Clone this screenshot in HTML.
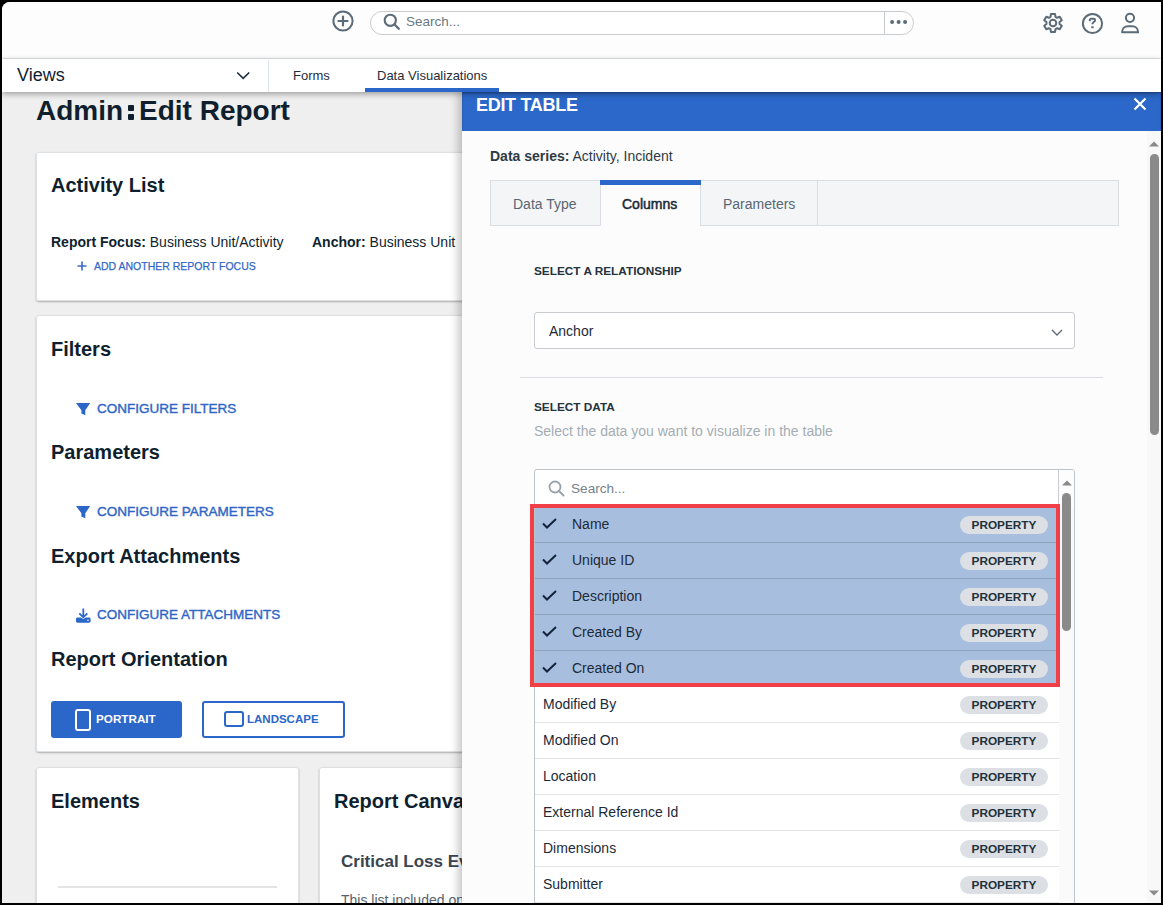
<!DOCTYPE html>
<html><head><meta charset="utf-8">
<style>
*{box-sizing:border-box;margin:0;padding:0}
html,body{width:1163px;height:905px;overflow:hidden;background:#000;font-family:"Liberation Sans",sans-serif;color:#0f1f2e}
#app{position:absolute;left:2px;top:2px;width:1159px;height:901px;background:#efefef;border-top-left-radius:8px;overflow:hidden}
.a{position:absolute;white-space:nowrap}
#topbar{position:absolute;left:0;top:0;width:1159px;height:57px;background:#fdfdfd}
#tbline{position:absolute;left:0;top:56px;width:1159px;height:1px;background:#dfe4e8}
#nav{position:absolute;left:0;top:57px;width:1159px;height:33px;background:#fff;box-shadow:0 2px 6px rgba(0,0,0,.35);z-index:6}
.card{position:absolute;background:#fff;border-radius:3px;box-shadow:inset 0 0 0 1px #dde0e3,0 1px 2px rgba(0,0,0,.28)}
.h{font-weight:bold;font-size:20px;color:#0f1f2e}
.link{color:#2f66c6;font-size:13.5px;font-weight:normal;-webkit-text-stroke:0.4px #2f66c6}
#panel{position:absolute;left:460px;top:89px;width:699px;height:812px;background:#fcfcfc;z-index:5;box-shadow:-4px 0 8px rgba(0,0,0,.22)}
</style></head><body>
<div id="app">
  <div id="topbar">
    <svg class="a" style="left:330px;top:8px" width="22" height="22" viewBox="0 0 22 22"><circle cx="11" cy="11" r="9.6" fill="none" stroke="#5b6b77" stroke-width="2"/><path d="M11 6.5v9M6.5 11h9" stroke="#5b6b77" stroke-width="2.2" stroke-linecap="round"/></svg>
    <div class="a" style="left:368px;top:9px;width:544px;height:24px;border:1px solid #c9cccf;border-radius:12px;background:#fff"></div>
    <div class="a" style="left:882px;top:9px;width:1px;height:24px;background:#c9cccf"></div>
    <svg class="a" style="left:381px;top:11px" width="18" height="18" viewBox="0 0 18 18"><circle cx="7.3" cy="7.3" r="5.6" fill="none" stroke="#5b6b77" stroke-width="2.1"/><path d="M11.5 11.5l4.3 4.3" stroke="#5b6b77" stroke-width="2.3" stroke-linecap="round"/></svg>
    <div class="a" style="left:404px;top:12px;font-size:13.5px;color:#6b7780">Search...</div>
    <svg class="a" style="left:886px;top:16px" width="22" height="8" viewBox="0 0 22 8"><circle cx="4.1" cy="4" r="2" fill="#5b6b77"/><circle cx="10.6" cy="4" r="2" fill="#5b6b77"/><circle cx="17.1" cy="4" r="2" fill="#5b6b77"/></svg>
    <!-- gear -->
    <svg class="a" style="left:1039px;top:9px" width="24" height="24" viewBox="0 0 24 24"><path fill="none" stroke="#5b6b77" stroke-width="2" stroke-linejoin="round" d="M9.53 5.88 L9.93 3.04 L14.07 3.04 L14.47 5.88 L16.06 6.80 L18.73 5.73 L20.80 9.31 L18.54 11.08 L18.54 12.92 L20.80 14.69 L18.73 18.27 L16.06 17.20 L14.47 18.12 L14.07 20.96 L9.93 20.96 L9.53 18.12 L7.94 17.20 L5.27 18.27 L3.20 14.69 L5.46 12.92 L5.46 11.08 L3.20 9.31 L5.27 5.73 L7.94 6.80Z"/><circle cx="12" cy="12" r="3.3" fill="none" stroke="#5b6b77" stroke-width="2"/></svg>
    <svg class="a" style="left:1079px;top:10px" width="23" height="23" viewBox="0 0 23 23"><circle cx="11.5" cy="11.5" r="9.6" fill="none" stroke="#5b6b77" stroke-width="2"/><path d="M8.8 9.2V8.3C8.8 7.3 9.4 6.8 10.4 6.8H12.6C13.6 6.8 14.1 7.4 14.1 8.2C14.1 9.2 13.4 9.7 12.5 10.2C11.8 10.7 11.4 11.1 11.4 12.2" fill="none" stroke="#5b6b77" stroke-width="2"/><rect x="10.3" y="14.2" width="2.3" height="2" fill="#5b6b77"/></svg>
    <svg class="a" style="left:1117px;top:9px" width="22" height="24" viewBox="0 0 22 24"><circle cx="11" cy="6.8" r="4.1" fill="none" stroke="#5b6b77" stroke-width="2"/><path d="M3.1 21.2C3.1 17.8 5.6 15.3 9 15.3H13.2C16.6 15.3 19.1 17.8 19.1 21.2Z" fill="none" stroke="#5b6b77" stroke-width="2" stroke-linejoin="round"/></svg>
  </div>
  <div id="tbline"></div>
  <div id="nav">
    <div class="a" style="left:15px;top:6px;font-size:18px;color:#0f2233">Views</div>
    <svg class="a" style="left:234px;top:12px" width="14" height="9" viewBox="0 0 14 9"><path d="M1.2 1.5l6 5.8 6-5.8" fill="none" stroke="#1e2e3c" stroke-width="1.6"/></svg>
    <div class="a" style="left:266px;top:1px;width:1px;height:32px;background:#dfe4e8"></div>
    <div class="a" style="left:291px;top:9px;font-size:13px;color:#1f2d3a">Forms</div>
    <div class="a" style="left:375px;top:9px;font-size:13px;color:#1f2d3a">Data Visualizations</div>
    <div class="a" style="left:363px;top:29px;width:134px;height:4px;background:#2b66c9"></div>
  </div>

  <div class="a" style="left:34px;top:93px;font-size:28px;font-weight:bold;color:#0f1f2e">Admin</div>
  <div class="a" style="left:126px;top:103px;width:6px;height:6px;background:#0f1f2e;border-radius:1px"></div>
  <div class="a" style="left:126px;top:112px;width:6px;height:6px;background:#0f1f2e;border-radius:1px"></div>
  <div class="a" style="left:137px;top:93px;font-size:28px;font-weight:bold;color:#0f1f2e">Edit Report</div>

  <!-- card 1 -->
  <div class="card" style="left:34px;top:150px;width:600px;height:149px">
    <div class="a h" style="left:15px;top:22px">Activity List</div>
    <div class="a" style="left:15px;top:82px;font-size:14px"><b>Report Focus:</b> Business Unit/Activity</div>
    <div class="a" style="left:276px;top:82px;font-size:14px"><b>Anchor:</b> Business Unit</div>
    <svg class="a" style="left:41px;top:109px" width="10" height="10" viewBox="0 0 10 10"><path d="M5 0.5v9M0.5 5h9" stroke="#3a6bc8" stroke-width="1.6"/></svg>
    <div class="a link" style="left:58px;top:107px;font-size:11.8px;font-weight:normal;-webkit-text-stroke:0.25px #2f66c6;transform:scaleX(0.89);transform-origin:0 0">ADD ANOTHER REPORT FOCUS</div>
  </div>
  <!-- card 2 -->
  <div class="card" style="left:34px;top:313px;width:600px;height:437px">
    <div class="a h" style="left:15px;top:23px">Filters</div>
    <svg class="a" style="left:40px;top:88px" width="15" height="13" viewBox="0 0 15 13"><path d="M0 0H14.2L9.3 7.2V12.2L5.4 10.4V7.2Z" fill="#2b66c9"/></svg>
    <div class="a link" style="left:61px;top:86px">CONFIGURE FILTERS</div>
    <div class="a h" style="left:15px;top:126px">Parameters</div>
    <svg class="a" style="left:40px;top:191px" width="15" height="13" viewBox="0 0 15 13"><path d="M0 0H14.2L9.3 7.2V12.2L5.4 10.4V7.2Z" fill="#2b66c9"/></svg>
    <div class="a link" style="left:61px;top:189px">CONFIGURE PARAMETERS</div>
    <div class="a h" style="left:15px;top:230px">Export Attachments</div>
    <svg class="a" style="left:40px;top:293px" width="15" height="15" viewBox="0 0 15 15"><path d="M7.3 0.5V8.5M3.3 5.3L7.3 9.3 11.3 5.3" fill="none" stroke="#2b66c9" stroke-width="1.8"/><path d="M0 11.2c0-1 .6-1.7 1.6-1.7h3.2l2.5 1.6 2.5-1.6h3.2c1 0 1.6.7 1.6 1.7v1.8c0 1-.6 1.7-1.6 1.7H1.6C.6 14.7 0 14 0 13z" fill="#2b66c9"/><circle cx="12" cy="12.3" r="0.8" fill="#fff"/></svg>
    <div class="a link" style="left:61px;top:292px">CONFIGURE ATTACHMENTS</div>
    <div class="a h" style="left:15px;top:333px">Report Orientation</div>
    <div class="a" style="left:15px;top:386px;width:131px;height:37px;background:#2b66c9;border-radius:3px"></div>
    <div class="a" style="left:39px;top:394px;width:16px;height:22px;border:2px solid #fff;border-radius:3px"></div>
    <div class="a" style="left:60px;top:397px;font-size:11.7px;font-weight:bold;color:#fff">PORTRAIT</div>
    <div class="a" style="left:166px;top:386px;width:143px;height:37px;border:2px solid #2b66c9;border-radius:3px"></div>
    <div class="a" style="left:188px;top:396px;width:20px;height:16px;border:2px solid #2b66c9;border-radius:3px"></div>
    <div class="a" style="left:211px;top:398px;font-size:11.5px;font-weight:bold;color:#2b66c9">LANDSCAPE</div>
  </div>
  <!-- bottom cards -->
  <div class="card" style="left:34px;top:765px;width:263px;height:200px">
    <div class="a h" style="left:15px;top:23px">Elements</div>
    <div class="a" style="left:22px;top:119px;width:219px;height:2px;background:#e4e4e4"></div>
  </div>
  <div class="card" style="left:317px;top:765px;width:400px;height:200px">
    <div class="a h" style="left:15px;top:23px">Report Canvas</div>
    <div class="a" style="left:22px;top:85px;font-size:17px;font-weight:bold;color:#3a4550">Critical Loss Events</div>
    <div class="a" style="left:22px;top:125px;font-size:14px;color:#56636e">This list included only</div>
  </div>

  <div id="panel">
    <div class="a" style="left:0;top:0;width:699px;height:40px;background:#2b68c9;box-shadow:inset 0 2px 2px rgba(0,0,0,.25)"></div>
    <div class="a" style="left:14px;top:4px;font-size:18px;font-weight:bold;color:#fff;letter-spacing:-0.3px">EDIT TABLE</div>
    <svg class="a" style="left:671px;top:6px" width="14" height="14" viewBox="0 0 14 14"><path d="M1.5 1.5l11 11M12.5 1.5l-11 11" stroke="#fff" stroke-width="2.2"/></svg>
    <!-- scrollbar -->
    <div class="a" style="left:685px;top:40px;width:14px;height:772px;background:#f8f8f8"></div>
    <svg class="a" style="left:687px;top:50px" width="10" height="6" viewBox="0 0 10 6"><path d="M0 5.5L5 0.5 10 5.5z" fill="#8a8a8a"/></svg>
    <div class="a" style="left:688px;top:63px;width:9px;height:281px;background:#8a8a8a;border-radius:5px"></div>
    <svg class="a" style="left:687px;top:799px" width="10" height="6" viewBox="0 0 10 6"><path d="M0 0.5L5 5.5 10 0.5z" fill="#8a8a8a"/></svg>

    <div class="a" style="left:28px;top:57px;font-size:14px;color:#2d3a46"><b>Data series:</b> Activity, Incident</div>
    <!-- tabs -->
    <div class="a" style="left:28px;top:89px;width:629px;height:46px;background:#f4f5f7;border:1px solid #dadde1"></div>
    <div class="a" style="left:138px;top:89px;width:101px;height:46px;background:#fcfcfc;border-left:1px solid #dadde1;border-right:1px solid #dadde1"></div>
    <div class="a" style="left:138px;top:89px;width:101px;height:5px;background:#2b68c9"></div>
    <div class="a" style="left:355px;top:89px;width:1px;height:46px;background:#dadde1"></div>
    <div class="a" style="left:51px;top:105px;font-size:14px;color:#5a6773">Data Type</div>
    <div class="a" style="left:160px;top:105px;font-size:14px;font-weight:normal;-webkit-text-stroke:0.5px #1c2a37;color:#1c2a37">Columns</div>
    <div class="a" style="left:261px;top:105px;font-size:14px;color:#5a6773">Parameters</div>

    <div class="a" style="left:72px;top:173px;font-size:11.8px;font-weight:bold;color:#24323f">SELECT A RELATIONSHIP</div>
    <div class="a" style="left:72px;top:221px;width:541px;height:37px;border:1px solid #c8cbcf;border-radius:3px;background:#fff"></div>
    <div class="a" style="left:87px;top:232px;font-size:14px;color:#1c2a37">Anchor</div>
    <svg class="a" style="left:589px;top:238px" width="12" height="7" viewBox="0 0 12 7"><path d="M1 1l5 5 5-5" fill="none" stroke="#5b6b77" stroke-width="1.4"/></svg>
    <div class="a" style="left:58px;top:286px;width:583px;height:1px;background:#dadde1"></div>
    <div class="a" style="left:72px;top:309px;font-size:11.8px;font-weight:bold;color:#24323f">SELECT DATA</div>
    <div class="a" style="left:72px;top:332px;font-size:14px;color:#a5adb4">Select the data you want to visualize in the table</div>

    <!-- list -->
    <div class="a" style="left:72px;top:378px;width:541px;height:440px;border:1px solid #bfc4c9;border-radius:3px;background:#fff;overflow:hidden">
      <div class="a" style="left:0;top:0;width:524px;height:37px;border-right:1px solid #c8cbcf;border-bottom:1px solid #e3e3e3"></div><div class="a" style="left:524px;top:0;width:15px;height:37px;background:#fdfdfd"></div>
      <div class="a" style="left:0;top:37px;width:524px;height:36px;background:#a8bedf;border-bottom:1px solid #8fa3bf"><svg class="a" style="left:7px;top:11px" width="15" height="11" viewBox="0 0 15 11"><path d="M1 5.5l4 4 9-8.5" fill="none" stroke="#13243a" stroke-width="2"/></svg><div class="a" style="left:37px;top:9px;font-size:14px;color:#1c2a37">Name</div><div class="a" style="left:425px;top:9px;width:88px;height:18px;border-radius:9px;background:#dcdfe3;font-size:11.8px;font-weight:bold;color:#22303c;text-align:center;line-height:18px">PROPERTY</div></div>
<div class="a" style="left:0;top:73px;width:524px;height:36px;background:#a8bedf;border-bottom:1px solid #8fa3bf"><svg class="a" style="left:7px;top:11px" width="15" height="11" viewBox="0 0 15 11"><path d="M1 5.5l4 4 9-8.5" fill="none" stroke="#13243a" stroke-width="2"/></svg><div class="a" style="left:37px;top:9px;font-size:14px;color:#1c2a37">Unique ID</div><div class="a" style="left:425px;top:9px;width:88px;height:18px;border-radius:9px;background:#dcdfe3;font-size:11.8px;font-weight:bold;color:#22303c;text-align:center;line-height:18px">PROPERTY</div></div>
<div class="a" style="left:0;top:109px;width:524px;height:36px;background:#a8bedf;border-bottom:1px solid #8fa3bf"><svg class="a" style="left:7px;top:11px" width="15" height="11" viewBox="0 0 15 11"><path d="M1 5.5l4 4 9-8.5" fill="none" stroke="#13243a" stroke-width="2"/></svg><div class="a" style="left:37px;top:9px;font-size:14px;color:#1c2a37">Description</div><div class="a" style="left:425px;top:9px;width:88px;height:18px;border-radius:9px;background:#dcdfe3;font-size:11.8px;font-weight:bold;color:#22303c;text-align:center;line-height:18px">PROPERTY</div></div>
<div class="a" style="left:0;top:145px;width:524px;height:36px;background:#a8bedf;border-bottom:1px solid #8fa3bf"><svg class="a" style="left:7px;top:11px" width="15" height="11" viewBox="0 0 15 11"><path d="M1 5.5l4 4 9-8.5" fill="none" stroke="#13243a" stroke-width="2"/></svg><div class="a" style="left:37px;top:9px;font-size:14px;color:#1c2a37">Created By</div><div class="a" style="left:425px;top:9px;width:88px;height:18px;border-radius:9px;background:#dcdfe3;font-size:11.8px;font-weight:bold;color:#22303c;text-align:center;line-height:18px">PROPERTY</div></div>
<div class="a" style="left:0;top:181px;width:524px;height:36px;background:#a8bedf;border-bottom:1px solid #8fa3bf"><svg class="a" style="left:7px;top:11px" width="15" height="11" viewBox="0 0 15 11"><path d="M1 5.5l4 4 9-8.5" fill="none" stroke="#13243a" stroke-width="2"/></svg><div class="a" style="left:37px;top:9px;font-size:14px;color:#1c2a37">Created On</div><div class="a" style="left:425px;top:9px;width:88px;height:18px;border-radius:9px;background:#dcdfe3;font-size:11.8px;font-weight:bold;color:#22303c;text-align:center;line-height:18px">PROPERTY</div></div>
<div class="a" style="left:0;top:217px;width:524px;height:36px;background:#fff;border-bottom:1px solid #e3e5e8"><div class="a" style="left:8px;top:9px;font-size:14px;color:#1c2a37">Modified By</div><div class="a" style="left:425px;top:9px;width:88px;height:18px;border-radius:9px;background:#dcdfe3;font-size:11.8px;font-weight:bold;color:#22303c;text-align:center;line-height:18px">PROPERTY</div></div>
<div class="a" style="left:0;top:253px;width:524px;height:36px;background:#fff;border-bottom:1px solid #e3e5e8"><div class="a" style="left:8px;top:9px;font-size:14px;color:#1c2a37">Modified On</div><div class="a" style="left:425px;top:9px;width:88px;height:18px;border-radius:9px;background:#dcdfe3;font-size:11.8px;font-weight:bold;color:#22303c;text-align:center;line-height:18px">PROPERTY</div></div>
<div class="a" style="left:0;top:289px;width:524px;height:36px;background:#fff;border-bottom:1px solid #e3e5e8"><div class="a" style="left:8px;top:9px;font-size:14px;color:#1c2a37">Location</div><div class="a" style="left:425px;top:9px;width:88px;height:18px;border-radius:9px;background:#dcdfe3;font-size:11.8px;font-weight:bold;color:#22303c;text-align:center;line-height:18px">PROPERTY</div></div>
<div class="a" style="left:0;top:325px;width:524px;height:36px;background:#fff;border-bottom:1px solid #e3e5e8"><div class="a" style="left:8px;top:9px;font-size:14px;color:#1c2a37">External Reference Id</div><div class="a" style="left:425px;top:9px;width:88px;height:18px;border-radius:9px;background:#dcdfe3;font-size:11.8px;font-weight:bold;color:#22303c;text-align:center;line-height:18px">PROPERTY</div></div>
<div class="a" style="left:0;top:361px;width:524px;height:36px;background:#fff;border-bottom:1px solid #e3e5e8"><div class="a" style="left:8px;top:9px;font-size:14px;color:#1c2a37">Dimensions</div><div class="a" style="left:425px;top:9px;width:88px;height:18px;border-radius:9px;background:#dcdfe3;font-size:11.8px;font-weight:bold;color:#22303c;text-align:center;line-height:18px">PROPERTY</div></div>
<div class="a" style="left:0;top:397px;width:524px;height:36px;background:#fff;border-bottom:1px solid #e3e5e8"><div class="a" style="left:8px;top:9px;font-size:14px;color:#1c2a37">Submitter</div><div class="a" style="left:425px;top:9px;width:88px;height:18px;border-radius:9px;background:#dcdfe3;font-size:11.8px;font-weight:bold;color:#22303c;text-align:center;line-height:18px">PROPERTY</div></div>
<div class="a" style="left:0;top:433px;width:524px;height:36px;background:#fff;border-bottom:1px solid #e3e5e8"><div class="a" style="left:8px;top:9px;font-size:14px;color:#1c2a37">Other</div><div class="a" style="left:425px;top:9px;width:88px;height:18px;border-radius:9px;background:#dcdfe3;font-size:11.8px;font-weight:bold;color:#22303c;text-align:center;line-height:18px">PROPERTY</div></div>

      <div class="a" style="left:524px;top:37px;width:15px;height:440px;background:#fafafa"></div>
      <svg class="a" style="left:527px;top:10px" width="10" height="6" viewBox="0 0 10 6"><path d="M0 5.5L5 0.5 10 5.5z" fill="#8a8a8a"/></svg>
      <div class="a" style="left:527px;top:23px;width:9px;height:138px;background:#8a8a8a;border-radius:5px"></div>
    </div>
    <svg class="a" style="left:86px;top:389px" width="17" height="17" viewBox="0 0 17 17"><circle cx="7" cy="7" r="5.5" fill="none" stroke="#9aa3ab" stroke-width="1.8"/><path d="M11 11l4.5 4.5" stroke="#9aa3ab" stroke-width="2" stroke-linecap="round"/></svg>
    <div class="a" style="left:109px;top:390px;font-size:13.6px;color:#76828c">Search...</div>
    <div class="a" style="left:68px;top:413px;width:530px;height:183px;border:4px solid #f03f47"></div>
  </div>
</div>
</body></html>
